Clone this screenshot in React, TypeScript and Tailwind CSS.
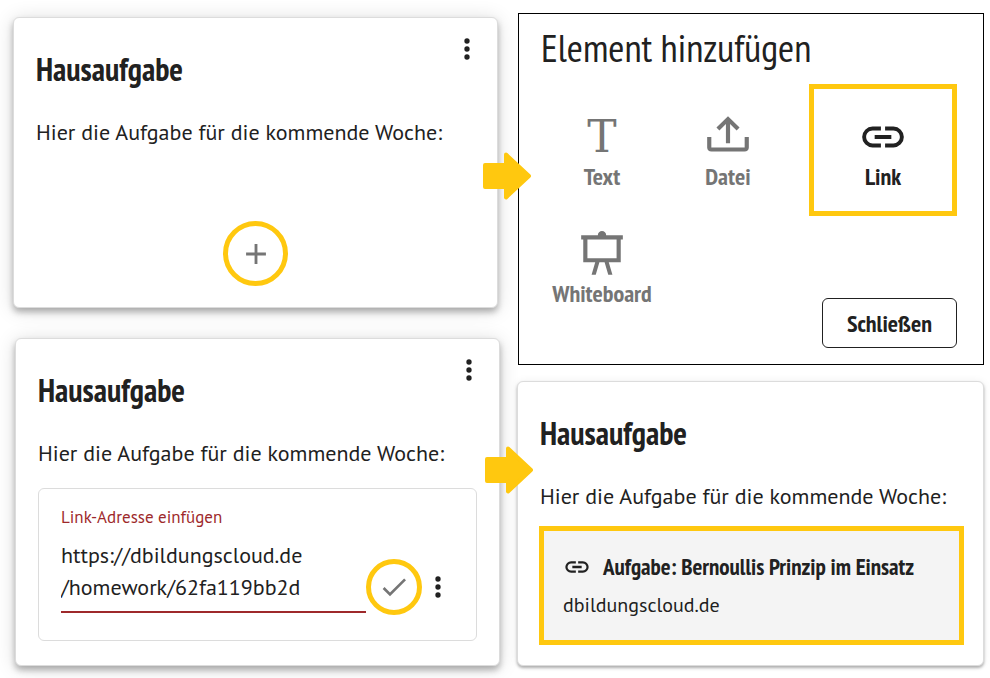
import { useState } from "react";
import type { ReactNode } from "react";

// Icon outlines on a 24x24 grid
const icons = {
  dots: "M12,16A2,2 0 0,1 14,18A2,2 0 0,1 12,20A2,2 0 0,1 10,18A2,2 0 0,1 12,16M12,10A2,2 0 0,1 14,12A2,2 0 0,1 12,14A2,2 0 0,1 10,12A2,2 0 0,1 12,10M12,4A2,2 0 0,1 14,6A2,2 0 0,1 12,8A2,2 0 0,1 10,6A2,2 0 0,1 12,4Z",
  plus: "M19,13H13V19H11V13H5V11H11V5H13V11H19V13Z",
  check: "M21,7L9,19L3.5,13.5L4.91,12.09L9,16.17L19.59,5.59L21,7Z",
  link: "M3.9,12C3.9,10.29 5.29,8.9 7,8.9H11V7H7A5,5 0 0,0 2,12A5,5 0 0,0 7,17H11V15.1H7C5.29,15.1 3.9,13.71 3.9,12M8,13H16V11H8V13M17,7H13V8.9H17C18.71,8.9 20.1,10.29 20.1,12C20.1,13.71 18.71,15.1 17,15.1H13V17H17A5,5 0 0,0 22,12A5,5 0 0,0 17,7Z",
  upload:
    "M2 12H4V17H20V12H22V17C22 18.11 21.11 19 20 19H4C2.9 19 2 18.11 2 17V12M12 2L6.46 7.46L7.88 8.88L11 5.75V15H13V5.75L16.13 8.88L17.55 7.45L12 2Z",
  board:
    "M2,3H10A2,2 0 0,1 12,1A2,2 0 0,1 14,3H22V5H21V16H15.25L17,22H15L13.25,16H10.75L9,22H7L8.75,16H3V5H2V3M5,5V14H19V5H5Z",
};

function Icon({ name, className }: { name: keyof typeof icons; className: string }) {
  return (
    <svg viewBox="0 0 24 24" className={className} fill="currentColor" aria-hidden="true">
      <path d={icons[name]} />
    </svg>
  );
}

// Yellow arrow leading to the next step
function Arrow({ className }: { className: string }) {
  return (
    <svg
      viewBox="0 0 48 48"
      className={`absolute z-10 size-12 text-[#ffc80f] ${className}`}
      fill="currentColor"
      stroke="currentColor"
      strokeWidth="4"
      strokeLinejoin="round"
      aria-hidden="true"
    >
      <path d="M2 13H23V2.500L46 24L23 45.500V35H2Z" />
    </svg>
  );
}

function MenuButton() {
  return (
    <button type="button" aria-label="Menü" className="size-8 shrink-0">
      <Icon name="dots" className="size-8" />
    </button>
  );
}

type CardProps = {
  menu?: boolean;
  className: string;
  children: ReactNode;
};

function Card({ menu, className, children }: CardProps) {
  return (
    <section className={`relative rounded-md border border-[#dcdcdc] bg-white px-[22px] pt-[15px] ${className}`}>
      <div className="-mr-2 flex items-start justify-between">
        <h2 className="pt-4 font-['PT_Sans_Narrow','Liberation_Sans_Narrow','Noto_Sans',sans-serif] text-[32px] leading-10 font-bold">
          Hausaufgabe
        </h2>
        {menu && <MenuButton />}
      </div>
      <p className="mt-[27px] text-[22px] leading-8">Hier die Aufgabe für die kommende Woche:</p>
      {children}
    </section>
  );
}

function ElementButton({ label, children }: { label: string; children: ReactNode }) {
  return (
    <button type="button" className="flex flex-col items-center pt-7 text-[#757575]">
      {children}
      <span className="font-['PT_Sans_Narrow','Liberation_Sans_Narrow','Noto_Sans',sans-serif] text-2xl leading-[30px] font-bold">
        {label}
      </span>
    </button>
  );
}

export default function App() {
  const [url, setUrl] = useState("https://dbildungscloud.de\n/homework/62fa119bb2d");

  return (
    <main className="grid grid-cols-[487fr_466fr] gap-x-[18px] bg-white pt-[13px] pr-1.5 pb-3 pl-[13px] font-['PT_Sans','Noto_Sans',sans-serif] text-[#212121]">
      <div className="flex flex-col gap-[30px] pt-1">
        {/* Card with the add button */}
        <Card menu className="mr-0.5 pb-[21px] shadow-[0_4px_6px_rgba(0,0,0,0.28),0_2px_20px_rgba(0,0,0,0.14)]">
          <button
            type="button"
            aria-label="Element hinzufügen"
            className="mx-auto mt-[73px] flex size-[65px] items-center justify-center rounded-full border-5 border-[#ffc80f] text-[#757575]"
          >
            <Icon name="plus" className="size-[34px]" />
          </button>
          <Arrow className="top-[134px] -right-[34px]" />
        </Card>

        {/* Card with the link form */}
        <Card menu className="ml-0.5 pb-6 shadow-[0_4px_6px_rgba(0,0,0,0.28),0_2px_20px_rgba(0,0,0,0.14)]">
          <div className="mt-[19px] rounded-md border border-[#dcdcdc] pt-4 pr-[22px] pb-[27px] pl-[22px]">
            <label htmlFor="url" className="block text-[17px] leading-6 text-[#9e292b]">
              Link-Adresse einfügen
            </label>
            <div className="mt-2.5 flex items-start">
              <textarea
                id="url"
                rows={2}
                value={url}
                onChange={(e) => setUrl(e.target.value)}
                className="block min-w-0 flex-1 resize-none overflow-hidden border-b-2 border-[#9e292b] pb-2 text-[22px] leading-8 outline-none"
              />
              <div className="-mb-1 flex items-center pt-5">
                <button
                  type="button"
                  aria-label="Speichern"
                  className="flex size-14 items-center justify-center rounded-full border-5 border-[#ffc80f] text-[#757575]"
                >
                  <Icon name="check" className="size-8" />
                </button>
                <MenuButton />
              </div>
            </div>
          </div>
          <Arrow className="top-[107px] -right-[34px]" />
        </Card>
      </div>

      <div className="flex flex-col gap-4">
        {/* Element selection */}
        <section className="border border-black pt-2.5 pr-[26px] pb-4 pl-5">
          <h1 className="pl-0.5 font-['PT_Sans_Narrow','Liberation_Sans_Narrow','Noto_Sans',sans-serif] text-[39px] leading-[48px]">
            Element hinzufügen
          </h1>
          <div className="mt-3 flex justify-between">
            <div className="grid grid-cols-[126px_126px] content-start gap-y-[9px]">
              <ElementButton label="Text">
                <span
                  aria-hidden="true"
                  className="h-[50px] font-['DejaVu_Serif',serif] text-[44px] leading-[50px]"
                >
                  T
                </span>
              </ElementButton>
              <ElementButton label="Datei">
                <Icon name="upload" className="size-[50px]" />
              </ElementButton>
              <ElementButton label="Whiteboard">
                <Icon name="board" className="size-[50px]" />
              </ElementButton>
            </div>
            <div className="flex flex-col items-end justify-between gap-[82px]">
              <button
                type="button"
                className="flex w-[148px] flex-col items-center border-5 border-[#ffc80f] pt-[23px] pb-[19px]"
              >
                <Icon name="link" className="size-[50px]" />
                <span className="font-['PT_Sans_Narrow','Liberation_Sans_Narrow','Noto_Sans',sans-serif] text-2xl leading-[30px] font-bold">
                  Link
                </span>
              </button>
              <button
                type="button"
                className="h-[50px] rounded-md border border-[#212121] px-6 pt-0.5 font-['PT_Sans_Narrow','Liberation_Sans_Narrow','Noto_Sans',sans-serif] text-2xl font-bold"
              >
                Schließen
              </button>
            </div>
          </div>
        </section>

        {/* Finished link */}
        <Card className="-ml-px pb-5 shadow-[0_2px_3px_rgba(0,0,0,0.3),0_0_8px_rgba(0,0,0,0.06)]">
          <a
            href="https://dbildungscloud.de"
            className="-mr-[3px] -ml-px mt-3.5 block border-5 border-[#ffc80f] bg-[#f4f4f4] px-[19px] pt-5 pb-[19px]"
          >
            <span className="flex items-center gap-3">
              <Icon name="link" className="size-7" />
              <span className="font-['PT_Sans_Narrow','Liberation_Sans_Narrow','Noto_Sans',sans-serif] text-[23px] leading-8 font-bold">
                Aufgabe: Bernoullis Prinzip im Einsatz
              </span>
            </span>
            <span className="mt-1.5 block text-xl leading-8">dbildungscloud.de</span>
          </a>
        </Card>
      </div>
    </main>
  );
}
